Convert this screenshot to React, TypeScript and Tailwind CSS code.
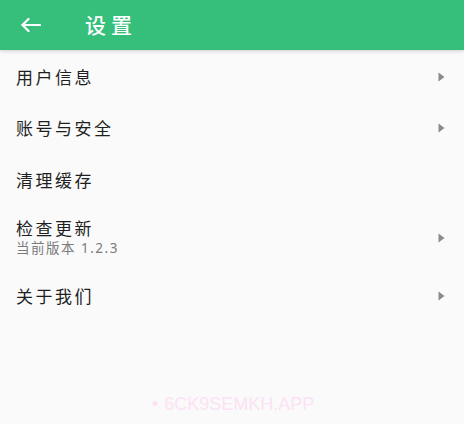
import React from "react";

const Arrow = () => (
  <svg width="7" height="10" viewBox="0 0 7 10" className="shrink-0">
    <path d="M0.5 0.5 L6.5 5 L0.5 9.5 Z" fill="#8a8a8a" />
  </svg>
);

type Row = { title: string; sub?: string; arrow: boolean };

const rows: Row[] = [
  { title: "用户信息", arrow: true },
  { title: "账号与安全", arrow: true },
  { title: "清理缓存", arrow: false },
  { title: "检查更新", sub: "当前版本 1.2.3", arrow: true },
  { title: "关于我们", arrow: true },
];

export default function App() {
  return (
    <div
      className="w-[464px] h-[424px] bg-[#fafafa] overflow-hidden relative flex flex-col"
      style={{ fontFamily: '"Noto Sans CJK SC", "Noto Sans", sans-serif' }}
    >
      <div className="h-[50px] shrink-0 bg-[#35bf7a] flex items-center shadow-[0_1px_4px_rgba(0,0,0,0.18)] relative z-10">
        <div className="w-[85px] pl-[21px] flex items-center">
          <svg width="20" height="14" viewBox="0 0 20 14" fill="none">
            <path d="M19 7 H1.5" stroke="#ffffff" strokeWidth="2.2" strokeLinecap="round" />
            <path d="M7.5 1 L1.5 7 L7.5 13" stroke="#ffffff" strokeWidth="2.2" strokeLinecap="round" strokeLinejoin="round" />
          </svg>
        </div>
        <span className="text-[21px] leading-none font-medium text-white tracking-[5px] -mt-[2px]">设置</span>
      </div>
      <div className="flex flex-col mt-px">
        {rows.map((r) => (
          <div
            key={r.title}
            className={`flex items-center justify-between pl-[16px] pr-[19px] ${r.sub ? "h-[64.5px]" : "h-[51.5px]"}`}
          >
            <div className="flex flex-col gap-[3px]">
              <span className="text-[17px] leading-[18px] text-[#1f1f1f] tracking-[2.5px]">{r.title}</span>
              {r.sub && (
                <span
                  className="text-[13.5px] leading-[16px] text-[#7a7a7a] tracking-[1.5px]"
                  style={{ fontFamily: '"Noto Sans", "Noto Sans CJK SC", sans-serif' }}
                >
                  {r.sub}
                </span>
              )}
            </div>
            {r.arrow && <Arrow />}
          </div>
        ))}
      </div>
      <div
        className="absolute left-[152px] top-[391px] text-[18px] text-[#fce2f4] flex items-center gap-[6px]"
        style={{ fontFamily: '"Liberation Sans", sans-serif' }}
      >
        <span>•</span>
        <span>6CK9SEMKH.APP</span>
      </div>
    </div>
  );
}
